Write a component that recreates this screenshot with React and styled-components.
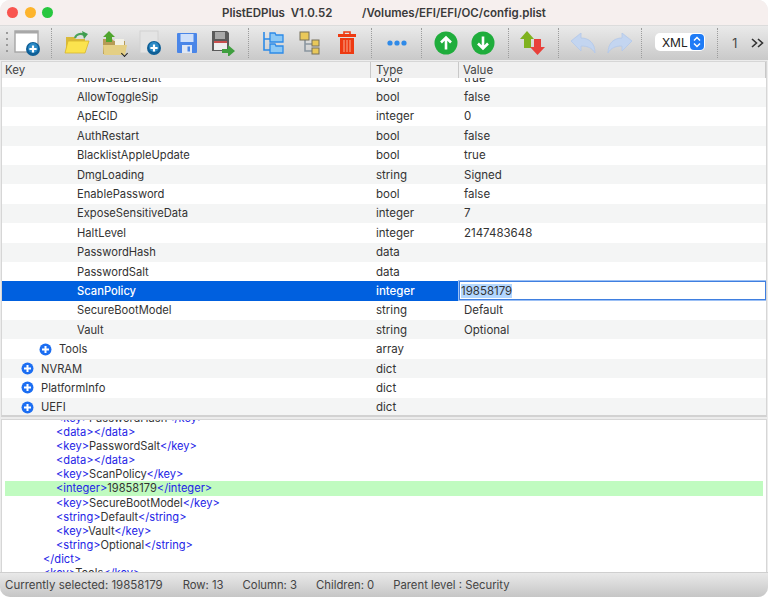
import styled, { createGlobalStyle } from "styled-components";

const rows = [
  { key: "AllowSetDefault", type: "bool", value: "true" },
  { key: "AllowToggleSip", type: "bool", value: "false" },
  { key: "ApECID", type: "integer", value: "0" },
  { key: "AuthRestart", type: "bool", value: "false" },
  { key: "BlacklistAppleUpdate", type: "bool", value: "true" },
  { key: "DmgLoading", type: "string", value: "Signed" },
  { key: "EnablePassword", type: "bool", value: "false" },
  { key: "ExposeSensitiveData", type: "integer", value: "7" },
  { key: "HaltLevel", type: "integer", value: "2147483648" },
  { key: "PasswordHash", type: "data", value: "" },
  { key: "PasswordSalt", type: "data", value: "" },
  { key: "ScanPolicy", type: "integer", value: "19858179", selected: true },
  { key: "SecureBootModel", type: "string", value: "Default" },
  { key: "Vault", type: "string", value: "Optional" },
  { key: "Tools", type: "array", value: "", level: 1 },
  { key: "NVRAM", type: "dict", value: "", level: 0 },
  { key: "PlatformInfo", type: "dict", value: "", level: 0 },
  { key: "UEFI", type: "dict", value: "", level: 0 },
];

const codeLines = [
  { indent: 56, tag: "key", text: "PasswordHash" },
  { indent: 56, tag: "data", text: "" },
  { indent: 56, tag: "key", text: "PasswordSalt" },
  { indent: 56, tag: "data", text: "" },
  { indent: 56, tag: "key", text: "ScanPolicy" },
  { indent: 56, tag: "integer", text: "19858179", current: true },
  { indent: 56, tag: "key", text: "SecureBootModel" },
  { indent: 56, tag: "string", text: "Default" },
  { indent: 56, tag: "key", text: "Vault" },
  { indent: 56, tag: "string", text: "Optional" },
  { indent: 43, close: "dict" },
  { indent: 43, tag: "key", text: "Tools" },
];

function PlusBadge({ cx, cy, r = 6.5 }) {
  return (
    <g>
      <circle cx={cx} cy={cy} r={r} fill="#0f5f96" />
      <circle cx={cx} cy={cy - 1} r={r - 2} fill="#2b8ac6" />
      <path d={`M${cx - 3.6} ${cy}h7.2M${cx} ${cy - 3.6}v7.2`} stroke="#fff" strokeWidth="2.2" />
    </g>
  );
}

const NewWindowIcon = () => (
  <svg width="26" height="26" viewBox="0 0 26 26">
    <rect x="1" y="1" width="23" height="21" fill="#fff" stroke="#a5a5a5" strokeWidth="1.4" />
    <rect x="1" y="1" width="23" height="2.5" fill="#a8a8a8" />
    <PlusBadge cx="19" cy="19" r="7" />
  </svg>
);

const OpenIcon = () => (
  <svg width="26" height="26" viewBox="0 0 26 26">
    <path d="M2 7h8l2 2h9v12H2z" fill="#d9b93a" />
    <path d="M4 11h21l-4 12H1z" fill="#fbe34e" stroke="#d8b62c" strokeWidth="0.8" />
    <path d="M11 8c1-4 6-5 9-3" fill="none" stroke="#4aa35a" strokeWidth="2.2" />
    <path d="M18 1l6 3-4 5z" fill="#3f9d50" />
  </svg>
);

const RecentIcon = () => (
  <svg width="26" height="26" viewBox="0 0 26 26">
    <path d="M2 9h9l2 2h11v13H2z" fill="#b79b55" />
    <path d="M14 9h9v6h-9z" fill="#f3f1e6" />
    <path d="M2 15h24l-2 10H3z" fill="#e4cf85" />
    <path d="M8 1l6 6h-3v5H5V7H2z" fill="#4fa52d" />
  </svg>
);

const NewDocIcon = () => (
  <svg width="26" height="26" viewBox="0 0 26 26">
    <rect x="3" y="1" width="18" height="22" fill="#e4e4e4" stroke="#d2d2d2" />
    <PlusBadge cx="17" cy="18" r="7" />
  </svg>
);

const SaveIcon = () => (
  <svg width="22" height="22" viewBox="0 0 22 22">
    <rect x="1" y="1" width="20" height="20" rx="1" fill="#4a86e8" />
    <rect x="4.5" y="2" width="13" height="8" fill="#cfe0fa" />
    <rect x="6" y="13" width="10" height="8" fill="#dfe7f4" />
    <rect x="11.5" y="14.5" width="2.5" height="5" fill="#4a86e8" />
  </svg>
);

const SaveAsIcon = () => (
  <svg width="26" height="26" viewBox="0 0 26 26">
    <path d="M2 1h15l2 2v18H2z" fill="#5b5b5b" />
    <rect x="5" y="2" width="10" height="7" fill="#a9a9a9" />
    <rect x="4" y="11" width="13" height="9" fill="#eee" />
    <rect x="4" y="11" width="13" height="2" fill="#c9504f" />
    <path d="M12 19h6v-4l7 6-7 6v-4h-6z" fill="#3f9f3f" />
  </svg>
);

const TreeBlueIcon = () => (
  <svg width="22" height="24" viewBox="0 0 22 24">
    <path d="M2 1v18h6M2 8h6" fill="none" stroke="#2c8ae8" strokeWidth="1.6" />
    <path d="M8 2h5l1 2h7v7H8zM8 13h5l1 2h7v7H8z" fill="#8cc8f5" stroke="#2c8ae8" strokeWidth="1.3" />
  </svg>
);

const TreeFolderIcon = () => (
  <svg width="22" height="24" viewBox="0 0 22 24">
    <path d="M6 8v12h7M6 13h7" fill="none" stroke="#8b96a0" strokeWidth="1.6" />
    <rect x="1" y="1" width="9" height="8" fill="#e9c85a" stroke="#77705a" />
    <rect x="13" y="9" width="7" height="6" fill="#e9c85a" stroke="#77705a" />
    <rect x="13" y="17" width="7" height="6" fill="#e9c85a" stroke="#77705a" />
  </svg>
);

const TrashIcon = () => (
  <svg width="20" height="24" viewBox="0 0 20 24">
    <path d="M7 3V1h6v2" fill="none" stroke="#ee3a12" strokeWidth="1.6" />
    <rect x="1" y="3" width="18" height="3" fill="#ee3a12" />
    <path d="M3 7h14v16H3z" fill="#ee3a12" />
    <path d="M7 9v12M10 9v12M13 9v12" stroke="#f79a7c" strokeWidth="1.2" />
  </svg>
);

const DotsIcon = () => (
  <svg width="22" height="8" viewBox="0 0 22 8">
    <circle cx="4" cy="4" r="2.6" fill="#2f8ae8" />
    <circle cx="11" cy="4" r="2.6" fill="#2f8ae8" />
    <circle cx="18" cy="4" r="2.6" fill="#2f8ae8" />
  </svg>
);

const ArrowCircleIcon = ({ down }) => (
  <svg width="24" height="24" viewBox="0 0 24 24">
    <circle cx="12" cy="12" r="11.5" fill="#1fad3c" />
    <path
      d={down ? "M12 5.5v12M7 12.5l5 5 5-5" : "M12 18.5v-12M7 11.5l5-5 5 5"}
      fill="none"
      stroke="#fff"
      strokeWidth="2.6"
    />
  </svg>
);

const SwapIcon = () => (
  <svg width="26" height="26" viewBox="0 0 26 26">
    <path d="M7 1l7 8h-3v9H4V9H0z" fill="#7fb21f" />
    <path d="M14 9h7v8h4l-7.5 8L10 17h4z" fill="#e8403a" />
  </svg>
);

const UndoIcon = ({ flip }) => (
  <svg width="26" height="20" viewBox="0 0 26 20" transform={flip ? "scale(-1 1)" : undefined}>
    <path
      d="M1 8L11 0v5c8 0 14 5 14 15-3-5-7-7-14-7v5z"
      fill="#c3d5f0"
      stroke="#b2c8ea"
      strokeWidth="0.8"
    />
  </svg>
);

const ExpandIcon = () => (
  <svg width="13" height="13" viewBox="0 0 13 13">
    <circle cx="6.5" cy="6.5" r="6" fill="#1c6ef2" />
    <path d="M3 6.5h7M6.5 3v7" stroke="#fff" strokeWidth="2" />
  </svg>
);

const SelectArrows = () => (
  <svg width="8" height="12" viewBox="0 0 8 12">
    <path d="M1 4.5L4 1.5l3 3M1 7.5l3 3 3-3" fill="none" stroke="#fff" strokeWidth="1.5" />
  </svg>
);

const MoreIcon = () => (
  <svg width="13" height="10" viewBox="0 0 13 10">
    <path d="M1 1l4.5 4L1 9M7 1l4.5 4L7 9" fill="none" stroke="#333" strokeWidth="1.6" />
  </svg>
);

export default function App() {
  return (
    <Page>
      <GlobalStyle />
      <TitleBar>
        <Lights>
          <Light color="#f9544f" />
          <Light color="#fdb42c" />
          <Light color="#28c73f" />
        </Lights>
        <Title>PlistEDPlus&nbsp; V1.0.52</Title>
        <TitlePath>/Volumes/EFI/EFI/OC/config.plist</TitlePath>
      </TitleBar>

      <Toolbar>
        <Grip />
        <ToolButton><NewWindowIcon /></ToolButton>
        <Separator />
        <ToolButton><OpenIcon /></ToolButton>
        <ToolButton>
          <RecentIcon />
          <Chevron />
        </ToolButton>
        <ToolButton><NewDocIcon /></ToolButton>
        <ToolButton><SaveIcon /></ToolButton>
        <ToolButton><SaveAsIcon /></ToolButton>
        <Separator />
        <ToolButton><TreeBlueIcon /></ToolButton>
        <ToolButton><TreeFolderIcon /></ToolButton>
        <ToolButton><TrashIcon /></ToolButton>
        <Separator />
        <ToolButton><DotsIcon /></ToolButton>
        <Separator />
        <ToolButton><ArrowCircleIcon /></ToolButton>
        <ToolButton><ArrowCircleIcon down /></ToolButton>
        <Separator />
        <ToolButton><SwapIcon /></ToolButton>
        <Separator />
        <ToolButton><UndoIcon /></ToolButton>
        <ToolButton><UndoIcon flip /></ToolButton>
        <Separator $narrow />
        <FormatSelect>
          XML
          <SelectChip><SelectArrows /></SelectChip>
        </FormatSelect>
        <Separator />
        <PageNumber>1</PageNumber>
        <MoreMark><MoreIcon /></MoreMark>
      </Toolbar>

      <TablePanel>
        <TableHeader>
          <HeaderCell>Key</HeaderCell>
          <HeaderCell>Type</HeaderCell>
          <HeaderCell>Value</HeaderCell>
        </TableHeader>
        <TableBody>
          <TableRows>
            {rows.map((row, index) => (
              <Row key={row.key} $odd={index % 2 === 1} $selected={row.selected}>
                <KeyCell $level={row.level}>
                  {row.level !== undefined && <ExpandIcon />}
                  {row.key}
                </KeyCell>
                <TypeCell>{row.type}</TypeCell>
                {row.selected ? (
                  <Editor>
                    <EditorSelection>{row.value}</EditorSelection>
                  </Editor>
                ) : (
                  <ValueCell>{row.value}</ValueCell>
                )}
              </Row>
            ))}
          </TableRows>
        </TableBody>
      </TablePanel>

      <CodePanel>
        <CodeLines>
          {codeLines.map((line, index) => (
            <CodeLine key={index} $indent={line.indent} $current={line.current}>
              {line.close ? (
                <Tag>{`</${line.close}>`}</Tag>
              ) : (
                <>
                  <Tag>{`<${line.tag}>`}</Tag>
                  {line.text}
                  <Tag>{`</${line.tag}>`}</Tag>
                </>
              )}
            </CodeLine>
          ))}
        </CodeLines>
      </CodePanel>

      <StatusBar>
        <SelectedText>Currently selected: 19858179</SelectedText>
        <span>Row: 13</span>
        <span>Column: 3</span>
        <span>Children: 0</span>
        <span>Parent level : Security</span>
      </StatusBar>
    </Page>
  );
}

const GlobalStyle = createGlobalStyle`
  html, body {
    margin: 0;
    background: #fff;
    overflow: hidden;
  }
  body {
    font-family: Inter, "Liberation Sans", sans-serif;
    color: #333;
  }
`;

const Page = styled.div`
  width: 768px;
  height: 597px;
  display: flex;
  flex-direction: column;
  overflow: hidden;
  border-radius: 10px;
  background: #ececec;
`;

const TitleBar = styled.header`
  height: 25px;
  flex: none;
  display: flex;
  align-items: center;
  background: #f6efee;
  font-size: 11.5px;
  font-weight: 600;
  color: #3a3a3a;
`;

const Lights = styled.div`
  display: flex;
  gap: 6.5px;
  padding-left: 7px;
  width: 222px;
  box-sizing: border-box;
`;

const Light = styled.span`
  width: 11px;
  height: 11px;
  border-radius: 50%;
  background: ${(props) => props.color};
`;

const Title = styled.span`
  width: 140px;
`;

const TitlePath = styled.span``;

const Toolbar = styled.div`
  height: 35px;
  flex: none;
  display: flex;
  align-items: center;
  box-sizing: border-box;
  background: linear-gradient(#eaeaea, #c9c9c9);
  border-top: 1px solid #dcdcdc;
`;

const Grip = styled.div`
  width: 8.7px;
  height: 22px;
  flex: none;
  background: radial-gradient(circle at 1.2px 1.2px, #9a9a9a 1px, transparent 1.2px) 6px 0 / 100% 6px;
`;

const ToolButton = styled.div`
  position: relative;
  width: 36.6px;
  height: 28px;
  flex: none;
  display: flex;
  align-items: center;
  justify-content: center;
`;

const Chevron = styled.span`
  position: absolute;
  right: 5px;
  bottom: 1px;
  width: 4px;
  height: 4px;
  border-right: 1px solid #222;
  border-bottom: 1px solid #222;
  transform: rotate(45deg);
`;

const Separator = styled.div`
  width: ${(props) => (props.$narrow ? "8px" : "13.4px")};
  height: 30px;
  flex: none;
  display: flex;
  justify-content: center;

  &::before {
    content: "";
    border-left: 1px dotted #9c9c9c;
  }
`;

const FormatSelect = styled.div`
  width: 50px;
  height: 18px;
  flex: none;
  margin: 0 6px 2px 9px;
  padding-left: 7px;
  box-sizing: border-box;
  display: flex;
  align-items: center;
  justify-content: space-between;
  border-radius: 5px;
  background: #fff;
  font-size: 12px;
  color: #222;
`;

const SelectChip = styled.span`
  width: 14px;
  height: 16px;
  margin-right: 1px;
  display: flex;
  align-items: center;
  justify-content: center;
  border-radius: 4px;
  background: #1f7cf6;
`;

const PageNumber = styled.span`
  margin-left: 8px;
  font-size: 12.5px;
  color: #444;
`;

const MoreMark = styled.span`
  margin-left: 14px;
  display: flex;
`;

const TablePanel = styled.section`
  height: 353px;
  flex: none;
  margin: 1px 1px 0;
  display: flex;
  flex-direction: column;
  border: 1px solid #d6d6d6;
  border-bottom: 2px solid #d2d2d2;
  background: #fff;
`;

const TableHeader = styled.div`
  height: 16px;
  flex: none;
  display: grid;
  grid-template-columns: 369px 88px 1fr;
  background: #f0f0f0;
  font-size: 11.5px;
  color: #444;
`;

const HeaderCell = styled.div`
  padding-left: 3px;
  line-height: 16px;
  border-right: 1px solid #c8c8c8;

  &:nth-child(2) {
    padding-left: 5px;
  }

  &:nth-child(3) {
    padding-left: 4px;
  }
`;

const TableBody = styled.div`
  flex: 1;
  overflow: hidden;
`;

const TableRows = styled.div`
  margin-top: -10px;
`;

const Row = styled.div`
  height: 19.4px;
  display: grid;
  grid-template-columns: 369px 88px 1fr;
  align-items: center;
  font-size: 11.2px;
  background: ${(props) =>
    props.$selected ? "#0060df" : props.$odd ? "#f4f5f5" : "#fff"};
  color: ${(props) => (props.$selected ? "#fff" : "#333")};
  font-weight: ${(props) => (props.$selected ? 500 : 400)};
`;

const keyPadding = { 0: "19px", 1: "37px" };

const KeyCell = styled.div`
  display: flex;
  align-items: center;
  gap: 7px;
  padding-left: ${(props) => keyPadding[props.$level] ?? "75px"};
`;

const TypeCell = styled.div`
  padding-left: 5px;
  font-size: 11.5px;
`;

const ValueCell = styled.div`
  padding-left: 5px;
  font-size: 11.5px;
  color: #333;
`;

const Editor = styled.div`
  height: 19px;
  display: flex;
  align-items: center;
  box-sizing: border-box;
  padding-left: 1px;
  font-size: 11.5px;
  background: #fff;
  border: 1px solid #3f7fe0;
  box-shadow: 0 0 0 1px #9cc0f5;
  color: #333;
  font-weight: 400;
`;

const EditorSelection = styled.span`
  background: #b3d7ff;
  line-height: 14px;
`;

const CodePanel = styled.section`
  flex: 1;
  min-height: 0;
  margin: 2px 1px 0;
  overflow: hidden;
  background: #fff;
  border: 1px solid #d6d6d6;
  border-bottom: none;
`;

const CodeLines = styled.div`
  margin-top: -9px;
  padding: 0 3px;
`;

const CodeLine = styled.div`
  height: 14.1px;
  line-height: 14.1px;
  padding-left: ${(props) => props.$indent - 5}px;
  font-size: 11.1px;
  color: #333;
  white-space: nowrap;
  background: ${(props) => (props.$current ? "#c0fbc0" : "transparent")};
`;

const Tag = styled.span`
  color: #2323e6;
`;

const StatusBar = styled.footer`
  height: 25px;
  flex: none;
  display: flex;
  align-items: center;
  gap: 19px;
  padding-left: 5px;
  box-sizing: border-box;
  background: linear-gradient(#e9e9e9, #c6c6c6);
  border-top: 1px solid #cfcfcf;
  font-size: 11.3px;
  color: #444;
`;

const SelectedText = styled.span`
  font-size: 11.5px;
  margin-right: 1px;
`;
